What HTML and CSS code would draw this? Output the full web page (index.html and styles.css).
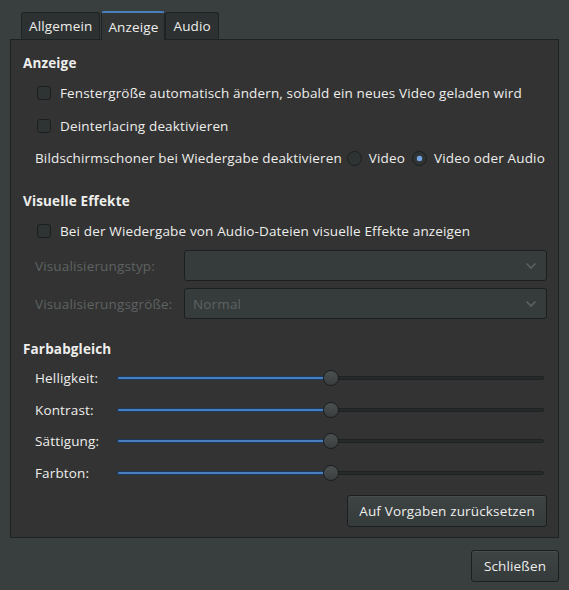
FILE: index.html
```html
<!DOCTYPE html>
<html lang="de">
<head>
<meta charset="utf-8">
<link rel="stylesheet" href="styles.css">
</head>
<body>
<div class="window">
  <div class="tabs">
    <div class="tab">Allgemein</div>
    <div class="tab active">Anzeige</div>
    <div class="tab">Audio</div>
  </div>
  <div class="panel">
    <div class="heading h1">Anzeige</div>
    <div class="row check-row r1"><span class="check"></span><span>Fenstergröße automatisch ändern, sobald ein neues Video geladen wird</span></div>
    <div class="row check-row r2"><span class="check"></span><span>Deinterlacing deaktivieren</span></div>
    <div class="row radio-row r3">
      <span class="label">Bildschirmschoner bei Wiedergabe deaktivieren</span>
      <span class="radio"></span><span>Video</span>
      <span class="radio on"></span><span>Video oder Audio</span>
    </div>
    <div class="heading h2">Visuelle Effekte</div>
    <div class="row check-row r4"><span class="check"></span><span>Bei der Wiedergabe von Audio-Dateien visuelle Effekte anzeigen</span></div>
    <div class="combo-row c1">
      <span class="dim label-col">Visualisierungstyp:</span>
      <div class="combo"><span></span><svg class="chev" width="12" height="8" viewBox="0 0 12 8"><path d="M1.5 1.5 L6 6 L10.5 1.5" fill="none" stroke="#5c6262" stroke-width="1.6"/></svg></div>
    </div>
    <div class="combo-row c2">
      <span class="dim label-col">Visualisierungsgröße:</span>
      <div class="combo"><span class="dim">Normal</span><svg class="chev" width="12" height="8" viewBox="0 0 12 8"><path d="M1.5 1.5 L6 6 L10.5 1.5" fill="none" stroke="#5c6262" stroke-width="1.6"/></svg></div>
    </div>
    <div class="heading h3">Farbabgleich</div>
    <div class="sliders">
      <div class="slider-row"><span class="slabel">Helligkeit:</span><div class="track"><div class="fill"></div><div class="knob"></div></div></div>
      <div class="slider-row"><span class="slabel">Kontrast:</span><div class="track"><div class="fill"></div><div class="knob"></div></div></div>
      <div class="slider-row"><span class="slabel">Sättigung:</span><div class="track"><div class="fill"></div><div class="knob"></div></div></div>
      <div class="slider-row"><span class="slabel">Farbton:</span><div class="track"><div class="fill"></div><div class="knob"></div></div></div>
    </div>
    <div class="btn-row"><button class="btn reset">Auf Vorgaben zurücksetzen</button></div>
  </div>
  <div class="footer"><button class="btn close">Schließen</button></div>
</div>
</body>
</html>
```
FILE: styles.css
```css
html, body {
  margin: 0;
  padding: 0;
  background: #393f3f;
}
body {
  width: 569px;
  height: 590px;
  overflow: hidden;
  font-family: "Open Sans", "DejaVu Sans", sans-serif;
  font-size: 13.5px;
  letter-spacing: 0.15px;
  color: #eeeeec;
}
.window {
  padding: 10px 10px 0 10px;
}
.tabs {
  display: flex;
  align-items: flex-end;
  height: 29px;
  padding-left: 11px;
  box-sizing: border-box;
}
.tab {
  height: 27px;
  box-sizing: border-box;
  padding: 0 7px;
  display: flex;
  align-items: center;
  background: #2d3131;
  border: 1px solid #1f2222;
  border-bottom: none;
  border-radius: 3px 3px 0 0;
  color: #eeeeec;
}
.tab.active {
  height: 29px;
  padding: 1px 6px 0 6px;
  background: #333535;
  border-top: 2px solid #4a7fbd;
  margin: 0 0 -1px 1px;
  position: relative;
  z-index: 1;
}
.panel {
  height: 499px;
  box-sizing: border-box;
  border: 1px solid #1f2222;
  background: #333333;
  padding: 0 11px 0 12px;
  display: flex;
  flex-direction: column;
}
.heading {
  font-weight: bold;
  height: 20px;
  line-height: 20px;
}
.h1 { margin-top: 13px; }
.row {
  display: flex;
  align-items: center;
  height: 20px;
}
.r1 { margin-top: 10px; padding-left: 14px; }
.r2 { margin-top: 13px; padding-left: 14px; }
.r3 { margin-top: 12px; padding-left: 12px; }
.h2 { margin-top: 23px; }
.r4 { margin-top: 10px; padding-left: 14px; }
.check {
  width: 14px;
  height: 14px;
  box-sizing: border-box;
  border: 1px solid #1c1f1f;
  border-radius: 3px;
  background: #2e3333;
  margin-right: 9px;
  flex: none;
}
.radio {
  width: 15px;
  height: 15px;
  box-sizing: border-box;
  border: 1px solid #1c1f1f;
  border-radius: 50%;
  background: #2e3333;
  margin: 0 7px 0 5px;
  position: relative;
  flex: none;
}
.radio.on {
  margin-left: 7px;
}
.radio.on::after {
  content: "";
  position: absolute;
  left: 4px;
  top: 4px;
  width: 5px;
  height: 5px;
  border-radius: 50%;
  background: #6ea4e8;
  box-shadow: 0 0 1px #bcd6f5;
}
.combo-row {
  display: flex;
  align-items: center;
  padding-left: 12px;
  height: 31px;
}
.c1 { margin-top: 9px; }
.c2 { margin-top: 7px; }
.label-col { width: 149px; flex: none; }
.dim { color: #5d6262; }
.combo {
  flex: 1;
  height: 31px;
  box-sizing: border-box;
  border: 1px solid #1c1f1f;
  border-radius: 3px;
  background: #363b3b;
  display: flex;
  align-items: center;
  justify-content: space-between;
  padding: 0 9px 0 8px;
}
.h3 { margin-top: 20px; }
.sliders {
  display: flex;
  flex-direction: column;
  margin-top: 9px;
}
.slider-row {
  display: flex;
  align-items: center;
  height: 20px;
  padding-left: 12px;
  margin-bottom: 11.7px;
}
.slabel { width: 82px; flex: none; }
.track {
  position: relative;
  width: 427px;
  height: 4px;
  box-sizing: border-box;
  background: #272a2a;
  border: 1px solid #1f2222;
  border-radius: 2px;
}
.fill {
  position: absolute;
  left: -1px;
  top: -1px;
  width: 214px;
  height: 4px;
  box-sizing: border-box;
  background: #4a7fbd;
  border: 1px solid #1b3a60;
  border-radius: 2px 0 0 2px;
}
.knob {
  position: absolute;
  left: 205px;
  top: -7px;
  width: 16px;
  height: 16px;
  box-sizing: border-box;
  border-radius: 50%;
  border: 1px solid #1c1f1f;
  background: linear-gradient(#4b5050, #3a3e3e);
}
.btn-row {
  display: flex;
  justify-content: flex-end;
}
.btn {
  font-family: inherit;
  font-size: 13.5px;
  letter-spacing: 0.15px;
  color: #eeeeec;
  border: 1px solid #1c1f1f;
  border-radius: 3px;
  background: linear-gradient(#3e4444, #353a3a);
  box-shadow: inset 0 1px rgba(255,255,255,0.05);
  height: 32px;
  padding: 0 11px;
}
.footer {
  display: flex;
  justify-content: flex-end;
  margin-top: 12px;
}
.close { width: 88px; }
```
